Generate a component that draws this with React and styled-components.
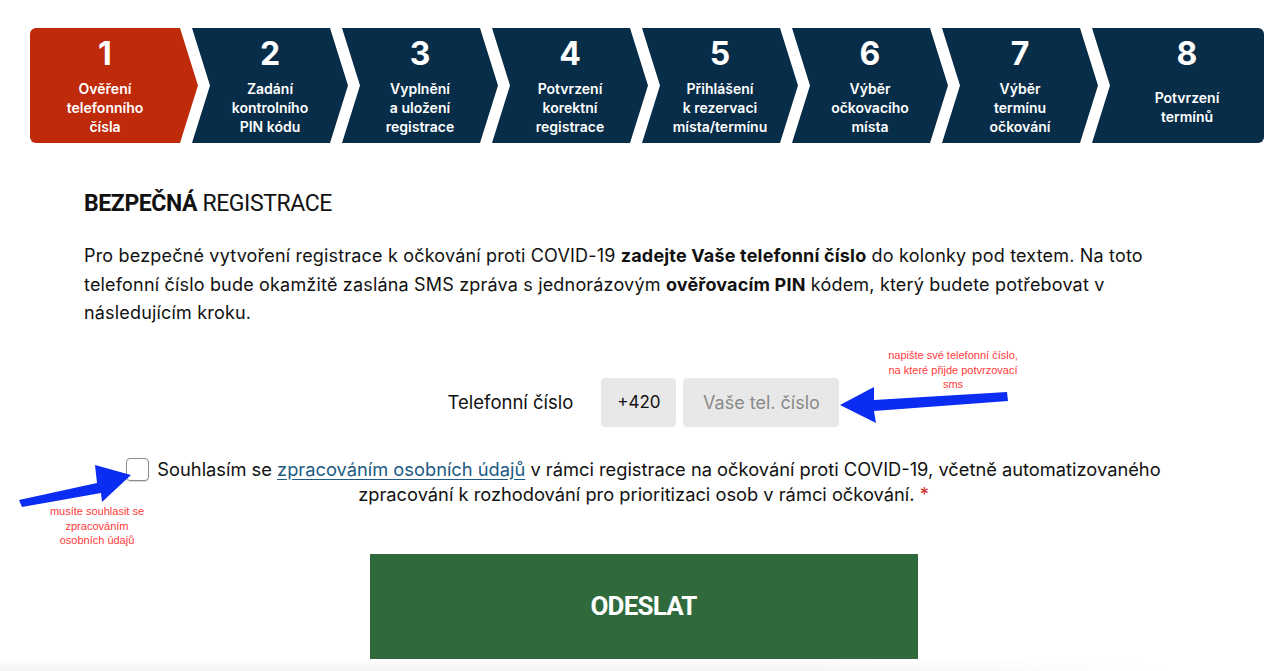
import React from 'react';
import styled, { createGlobalStyle } from 'styled-components';

const GlobalStyle = createGlobalStyle`
  body {
    margin: 0;
    background: #fff;
    font-family: Inter, "Open Sans", sans-serif;
    color: #111;
  }
`;

const steps = [
  { n: 1, label: ['Ověření', 'telefonního', 'čísla'] },
  { n: 2, label: ['Zadání', 'kontrolního', 'PIN kódu'] },
  { n: 3, label: ['Vyplnění', 'a uložení', 'registrace'] },
  { n: 4, label: ['Potvrzení', 'korektní', 'registrace'] },
  { n: 5, label: ['Přihlášení', 'k rezervaci', 'místa/termínu'] },
  { n: 6, label: ['Výběr', 'očkovacího', 'místa'] },
  { n: 7, label: ['Výběr', 'termínu', 'očkování'] },
  { n: 8, label: ['Potvrzení', 'termínů'] },
];

const Page = styled.div`
  position: relative;
  min-height: 671px;
  overflow: hidden;
`;

const StepBar = styled.nav`
  display: flex;
  padding: 28px 16px 0 30px;
`;

const clip = {
  first: 'polygon(0 0, calc(100% - 18px) 0, 100% 50%, calc(100% - 18px) 100%, 0 100%)',
  middle: 'polygon(0 0, calc(100% - 18px) 0, 100% 50%, calc(100% - 18px) 100%, 0 100%, 18px 50%)',
  last: 'polygon(0 0, 100% 0, 100% 100%, 0 100%, 18px 50%)',
};

const Step = styled.div`
  height: 115px;
  flex: ${(p) => (p.$kind === 'last' ? '1 1 auto' : `0 0 ${p.$kind === 'first' ? 168 : 156}px`)};
  margin-left: ${(p) => (p.$kind === 'first' ? 0 : -6)}px;
  padding: 7px ${(p) => (p.$kind === 'last' ? 0 : 18)}px 2px ${(p) => (p.$kind === 'first' ? 0 : 18)}px;
  box-sizing: border-box;
  background: ${(p) => (p.$active ? '#bf2a0b' : '#082d48')};
  clip-path: ${(p) => clip[p.$kind]};
  border-radius: ${(p) => (p.$kind === 'first' ? '6px 0 0 6px' : p.$kind === 'last' ? '0 6px 6px 0' : '0')};
  color: #fff;
  display: flex;
  flex-direction: column;
  align-items: center;
  text-align: center;
`;

const StepNum = styled.div`
  font-size: 32px;
  line-height: 38px;
  font-weight: 700;
`;

const StepLabel = styled.div`
  flex: 1;
  display: flex;
  flex-direction: column;
  justify-content: center;
  font-size: 14px;
  line-height: 19px;
  font-weight: 600;
`;

const Content = styled.main`
  max-width: 1112px;
  margin: 0 auto;
  padding-top: 46px;
`;

const Heading = styled.h1`
  margin: 0 0 23px;
  font-family: Roboto, "Liberation Sans", sans-serif;
  font-size: 23px;
  line-height: 30px;
  font-weight: 400;
  letter-spacing: -0.4px;
  b {
    font-weight: 700;
  }
`;

const Lead = styled.p`
  margin: 0;
  font-size: 18px;
  line-height: 28.5px;
  letter-spacing: 0.18px;
`;

const Form = styled.form`
  position: relative;
  padding-left: 7px;
  margin-top: 50px;
  display: flex;
  flex-direction: column;
  align-items: center;
`;

const PhoneRow = styled.div`
  display: flex;
  align-items: center;
  gap: 7px;
`;

const FieldLabel = styled.label`
  font-size: 18.5px;
  margin-right: 21px;
`;

const Field = styled.div`
  height: 49px;
  width: ${(p) => p.$w}px;
  box-sizing: border-box;
  border-radius: 4px;
  background: #e8e8e8;
  display: flex;
  align-items: center;
  justify-content: center;
  font-size: ${(p) => (p.$placeholder ? 18 : 17)}px;
  color: ${(p) => (p.$placeholder ? '#8a8a8a' : '#111')};
`;

const Consent = styled.div`
  margin-top: 30px;
  max-width: 1080px;
  text-align: center;
  font-size: 18.3px;
  line-height: 25px;
`;

const Box = styled.span`
  display: inline-block;
  width: 21px;
  height: 21px;
  border: 1.5px solid #8c8c8c;
  border-radius: 4px;
  vertical-align: -5px;
  margin-right: 8px;
  box-shadow: 0 1px 1px rgba(0, 0, 0, 0.15);
`;

const Link = styled.a`
  color: #215a82;
  text-decoration: underline;
  text-underline-offset: 3px;
`;

const Req = styled.span`
  color: #d0312d;
`;

const Submit = styled.button`
  margin-top: 47px;
  width: 548px;
  height: 105px;
  border: 0;
  background: #2f693c;
  color: #fff;
  font-family: Roboto, "Liberation Sans", sans-serif;
  font-size: 26px;
  font-weight: 700;
  letter-spacing: -0.8px;
  cursor: pointer;
`;

const Note = styled.div`
  position: absolute;
  left: ${(p) => p.$x}px;
  top: ${(p) => p.$y}px;
  width: ${(p) => p.$w}px;
  text-align: center;
  color: #ff3b3b;
  font-family: "Liberation Sans", Arial, sans-serif;
  font-size: 11px;
  line-height: 14.5px;
`;

const Overlay = styled.svg`
  position: absolute;
  left: 0;
  top: 0;
  pointer-events: none;
`;

const BottomFade = styled.div`
  position: fixed;
  left: 0;
  right: 0;
  bottom: 0;
  height: 12px;
  background: linear-gradient(180deg, rgba(0, 0, 0, 0), rgba(0, 0, 0, 0.05));
  -webkit-mask-image: linear-gradient(90deg, #000 60%, transparent 92%);
  mask-image: linear-gradient(90deg, #000 60%, transparent 92%);
`;

export default function App() {
  return (
    <Page>
      <GlobalStyle />
      <StepBar>
        {steps.map((s, i) => (
          <Step
            key={s.n}
            $active={i === 0}
            $kind={i === 0 ? 'first' : i === steps.length - 1 ? 'last' : 'middle'}
          >
            <StepNum>{s.n}</StepNum>
            <StepLabel>
              {s.label.map((l) => (
                <span key={l}>{l}</span>
              ))}
            </StepLabel>
          </Step>
        ))}
      </StepBar>

      <Content>
        <Heading>
          <b>BEZPEČNÁ</b> REGISTRACE
        </Heading>
        <Lead>
          Pro bezpečné vytvoření registrace k očkování proti COVID-19 <b>zadejte Vaše telefonní číslo</b> do
          kolonky pod textem. Na toto telefonní číslo bude okamžitě zaslána SMS zpráva s jednorázovým{' '}
          <b>ověřovacím PIN</b> kódem, který budete potřebovat v následujícím kroku.
        </Lead>
      </Content>

      <Form onSubmit={(e) => e.preventDefault()}>
        <PhoneRow>
          <FieldLabel>Telefonní číslo</FieldLabel>
          <Field $w={75}>+420</Field>
          <Field $w={156} $placeholder>Vaše tel. číslo</Field>
        </PhoneRow>
        <Consent>
          <Box />
          Souhlasím se <Link href="#">zpracováním osobních údajů</Link> v rámci registrace na očkování proti
          COVID-19, včetně automatizovaného zpracování k rozhodování pro prioritizaci osob v rámci očkování.{' '}
          <Req>*</Req>
        </Consent>
        <Submit type="submit">ODESLAT</Submit>
      </Form>

      <Note $x={873} $y={348} $w={160}>
        napište své telefonní číslo,
        <br />
        na které přijde potvrzovací
        <br />
        sms
      </Note>
      <Note $x={37} $y={504} $w={120}>
        musíte souhlasit se
        <br />
        zpracováním
        <br />
        osobních údajů
      </Note>

      <Overlay width="1280" height="671" viewBox="0 0 1280 671">
        <g fill="#0b2cf2">
          <polygon points="1007,392 1008,401 874,411 876,423 840,405 874,387 874,400" />
          <polygon points="19,500 22,507 101,493 102,502 131,475 95,465 97,483" />
        </g>
      </Overlay>
      <BottomFade />
    </Page>
  );
}
